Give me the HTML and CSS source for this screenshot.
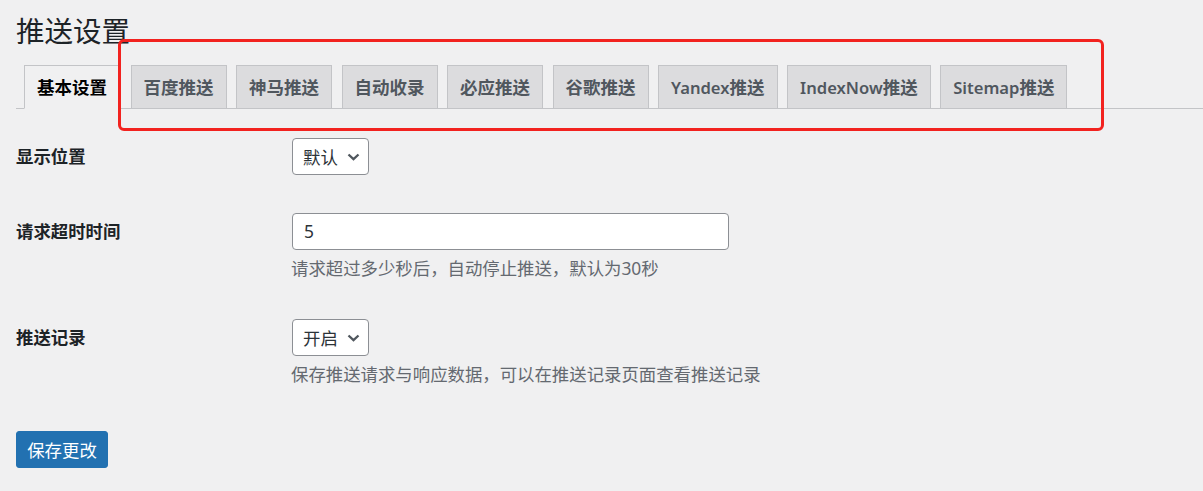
FILE: index.html
```html
<!DOCTYPE html>
<html lang="zh-CN">
<head>
<meta charset="utf-8">
<title>推送设置</title>
<link rel="stylesheet" href="styles.css">
</head>
<body>
<div class="wrap">
  <h1 class="title">推送设置</h1>
  <nav class="tabs">
    <a class="tab active">基本设置</a>
    <a class="tab">百度推送</a>
    <a class="tab">神马推送</a>
    <a class="tab">自动收录</a>
    <a class="tab">必应推送</a>
    <a class="tab">谷歌推送</a>
    <a class="tab"><span class="lat">Yandex</span>推送</a>
    <a class="tab"><span class="lat">IndexNow</span>推送</a>
    <a class="tab"><span class="lat">Sitemap</span>推送</a>
  </nav>
  <div class="form">
    <div class="row row-first">
      <div class="label">显示位置</div>
      <div class="field">
        <div class="select"><span>默认</span><svg class="chev" width="13" height="8" viewBox="0 0 13 8"><path d="M1.5 1.5 L6.5 6.2 L11.5 1.5" fill="none" stroke="#50575e" stroke-width="2.3"/></svg></div>
      </div>
    </div>
    <div class="row">
      <div class="label">请求超时时间</div>
      <div class="field">
        <div class="input">5</div>
        <p class="desc">请求超过多少秒后，自动停止推送，默认为30秒</p>
      </div>
    </div>
    <div class="row">
      <div class="label">推送记录</div>
      <div class="field">
        <div class="select"><span>开启</span><svg class="chev" width="13" height="8" viewBox="0 0 13 8"><path d="M1.5 1.5 L6.5 6.2 L11.5 1.5" fill="none" stroke="#50575e" stroke-width="2.3"/></svg></div>
        <p class="desc">保存推送请求与响应数据，可以在推送记录页面查看推送记录</p>
      </div>
    </div>
    <div class="submit">
      <button class="btn">保存更改</button>
    </div>
  </div>
</div>
<div class="highlight"></div>
</body>
</html>
```

FILE: styles.css
```css
html, body {
  margin: 0;
  padding: 0;
  background: #f0f0f1;
  font-family: "Noto Sans", "Noto Sans CJK SC", sans-serif;
  color: #1d2327;
}
.wrap {
  padding-left: 16px;
}
.title {
  margin: 0;
  padding-top: 11px;
  font-size: 28.5px;
  line-height: 40px;
  font-weight: 400;
  color: #1d2327;
  height: 54px;
}
.tabs {
  display: flex;
  align-items: flex-end;
  border-bottom: 1px solid #c3c4c7;
  padding-left: 8px;
}
.tab {
  display: block;
  box-sizing: border-box;
  height: 44px;
  line-height: 42px;
  padding: 0 12px;
  margin-left: 9.5px;
  margin-bottom: -1px;
  border: 1px solid #c3c4c7;
  background: #dcdcde;
  color: #50575e;
  font-size: 17.5px;
  font-weight: 600;
  white-space: nowrap;
}
.tab .lat {
  font-size: 16.6px;
}
.tab.active {
  margin-left: 0;
  background: #f0f0f1;
  border-bottom-color: #f0f0f1;
  color: #000;
}
.tab.active + .tab {
  margin-left: 10.5px;
}
.row {
  display: grid;
  grid-template-columns: 276px 1fr;
  padding: 19px 0;
}
.row-first {
  padding-top: 29px;
}
.label {
  font-size: 17.4px;
  font-weight: 600;
  line-height: 37px;
  color: #1d2327;
}
.select {
  box-sizing: border-box;
  width: 77px;
  height: 37px;
  display: flex;
  align-items: center;
  padding-left: 10px;
  border: 1px solid #8c8f94;
  border-radius: 4px;
  background: #fff;
  font-size: 17.4px;
  color: #2c3338;
}
.chev {
  margin-left: 9px;
  margin-top: 1px;
}
.input {
  box-sizing: border-box;
  width: 437px;
  height: 37px;
  line-height: 35px;
  padding-left: 11px;
  border: 1px solid #8c8f94;
  border-radius: 4px;
  background: #fff;
  font-size: 17.4px;
  color: #2c3338;
}
.desc {
  margin: 6px 0 0 -1px;
  font-size: 17.4px;
  line-height: 25px;
  color: #646970;
}
.submit {
  padding-top: 25px;
}
.btn {
  box-sizing: border-box;
  width: 92px;
  height: 37px;
  border: 1px solid #2271b1;
  border-radius: 3px;
  background: #2271b1;
  color: #fff;
  font-family: "Noto Sans", "Noto Sans CJK SC", sans-serif;
  font-size: 17.4px;
  padding: 0;
}
.highlight {
  position: absolute;
  left: 118px;
  top: 39px;
  width: 986px;
  height: 92px;
  box-sizing: border-box;
  border: 3px solid #f2221f;
  border-radius: 6px;
}
```
